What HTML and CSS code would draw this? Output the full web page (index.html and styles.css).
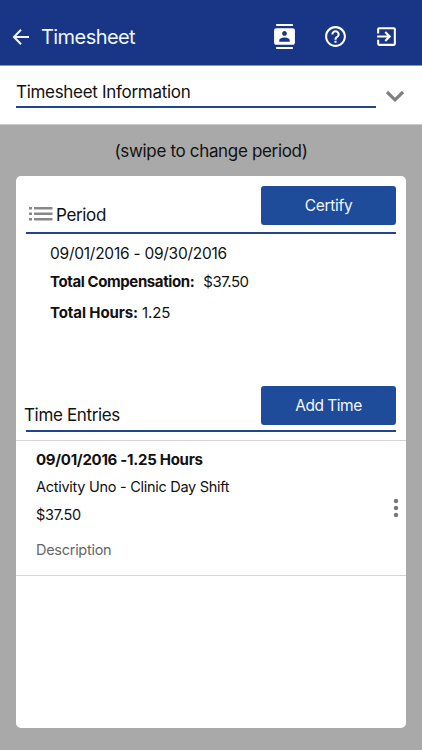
FILE: index.html
```html
<!DOCTYPE html>
<html lang="en">
<head>
<meta charset="utf-8">
<title>Timesheet</title>
<link rel="stylesheet" href="styles.css">
</head>
<body>
<header class="topbar">
  <svg class="back" viewBox="0 0 18 16"><path d="M9 .8 2 8l7 7.2M2 8h15" fill="none" stroke="currentColor" stroke-width="2"/></svg>
  <h1 class="title">Timesheet</h1>
  <svg class="action" viewBox="0 0 24 24"><path d="M20 0H4v2h16V0zM4 24h16v-2H4v2zM20 4H4c-1.100 0-2 .9-2 2v12c0 1.100.9 2 2 2h16c1.100 0 2-.9 2-2V6c0-1.100-.9-2-2-2zm-8 2.750c1.240 0 2.250 1.010 2.250 2.250s-1.010 2.250-2.250 2.250S9.750 10.240 9.750 9 10.760 6.750 12 6.750zM17 17H7v-1.500c0-1.670 3.330-2.500 5-2.500s5 .83 5 2.500V17z"/></svg>
  <svg class="action" viewBox="0 0 24 24"><path d="M11 18h2v-2h-2v2zm1-16C6.480 2 2 6.480 2 12s4.480 10 10 10 10-4.480 10-10S17.520 2 12 2zm0 18c-4.410 0-8-3.590-8-8s3.590-8 8-8 8 3.590 8 8-3.590 8-8 8zm0-14c-2.210 0-4 1.790-4 4h2c0-1.100.9-2 2-2s2 .9 2 2c0 2-3 1.750-3 5h2c0-2.250 3-2.500 3-5 0-2.210-1.790-4-4-4z"/></svg>
  <svg class="action" viewBox="0 0 24 24"><path d="M10.090 15.590L11.500 17l5-5-5-5-1.410 1.410L12.670 11H3v2h9.670l-2.580 2.590zM19 3H5c-1.110 0-2 .9-2 2v4h2V5h14v14H5v-4H3v4c0 1.100.89 2 2 2h14c1.100 0 2-.9 2-2V5c0-1.100-.9-2-2-2z"/></svg>
</header>
<section class="info">
  <h2 class="info-title">Timesheet Information</h2>
  <svg class="chevron" viewBox="0 0 20 12"><path d="M2 2l8 7.800L18 2" fill="none" stroke="#808080" stroke-width="3.200"/></svg>
</section>
<main class="content">
  <p class="hint">(swipe to change period)</p>
  <article class="card">
    <div class="section-head">
      <svg class="list-icon" viewBox="0 0 24 14"><path d="M0 0h3v2.500H0zM5 0h18.500v2.500H5zM0 5.500h3V8H0zM5 5.500h18.500V8H5zM0 11h3v2.500H0zM5 11h18.500v2.500H5z" fill="#888"/></svg>
      <h3 class="section-title">Period</h3>
      <button class="button">Certify</button>
    </div>
    <div class="summary">
      <p class="dates">09/01/2016 - 09/30/2016</p>
      <p class="compensation"><b>Total Compensation:</b><span class="amount">$37.50</span></p>
      <p class="hours"><b>Total Hours:</b><span class="count">1.25</span></p>
    </div>
    <div class="section-head entries-head">
      <h3 class="section-title">Time Entries</h3>
      <button class="button add">Add Time</button>
    </div>
    <div class="entry">
      <div class="entry-text">
        <p class="entry-date"><b>09/01/2016 -1.25 Hours</b></p>
        <p class="activity">Activity Uno - Clinic Day Shift</p>
        <p class="pay">$37.50</p>
        <p class="description">Description</p>
      </div>
      <svg class="more" viewBox="0 0 6 20"><g fill="#777"><circle cx="3" cy="3" r="2.200"/><circle cx="3" cy="10" r="2.200"/><circle cx="3" cy="17" r="2.200"/></g></svg>
    </div>
  </article>
</main>
</body>
</html>
```
FILE: styles.css
```css
* { box-sizing: border-box; }
body {
  margin: 0;
  height: 750px;
  display: flex;
  flex-direction: column;
  overflow: hidden;
  background: #a9a9a9;
  color: #111;
  font: 15px/20px Inter, Roboto, sans-serif;
  white-space: nowrap;
}
h1, h2, h3, p { margin: 0; font-weight: 400; }
b { font-weight: 700; }
svg { display: block; flex: none; }
.topbar {
  height: 66px;
  padding: 8px 23px 0 12px;
  display: flex;
  align-items: center;
  background: #193686;
  border-bottom: 1px solid #8493c4;
  color: #f0f6ff;
}
.back { width: 18px; height: 16px; }
.title {
  flex: 1;
  margin-left: 11px;
  font-size: 20px;
  line-height: 24px;
  letter-spacing: -0.57px;
}
.action { width: 25px; height: 25px; margin-left: 26px; fill: #fff; }
.info {
  height: 59px;
  padding: 0 17px 0 16px;
  display: flex;
  background: #fff;
  border-bottom: 1px solid #ccc;
}
.info-title {
  width: 360px;
  height: 42px;
  padding-top: 15px;
  border-bottom: 2px solid #1f4590;
  font-size: 17px;
  line-height: 22px;
  letter-spacing: -0.3px;
}
.chevron { width: 20px; height: 12px; margin: 24px 0 0 9px; }
.content { flex: 1; padding: 15px 16px 22px; }
.hint {
  font-size: 17px;
  line-height: 22px;
  letter-spacing: -0.33px;
  text-align: center;
}
.card {
  height: 552px;
  margin-top: 14px;
  padding-top: 10px;
  border-radius: 5px;
  background: #fff;
}
.section-head {
  height: 48px;
  margin: 0 10px;
  display: flex;
  align-items: flex-start;
  border-bottom: 2px solid #1f4590;
}
.list-icon { width: 24px; height: 14px; margin: 21px 3px 0; }
.section-title {
  flex: 1;
  margin-top: 18px;
  font-size: 17px;
  line-height: 22px;
  letter-spacing: -0.35px;
}
.button {
  width: 135px;
  height: 39px;
  padding: 0;
  border: 0;
  border-radius: 3px;
  background: #1f4b9b;
  color: #f2f7ff;
  font: 15.5px/20px Inter, Roboto, sans-serif;
  letter-spacing: -0.3px;
}
.add { letter-spacing: -0.5px; }
.summary { height: 152px; padding: 9px 34px 0; }
.dates { font-size: 15.5px; line-height: 22px; letter-spacing: -0.25px; }
.compensation { margin-top: 7px; letter-spacing: -0.5px; }
.compensation b { letter-spacing: -0.4px; }
.amount { margin-left: 9px; }
.hours { margin-top: 11px; letter-spacing: -0.12px; }
.hours b { letter-spacing: -0.1px; }
.count { margin-left: 4px; }
.entries-head { height: 46px; }
.entries-head .section-title { margin-left: -2px; }
.entry {
  height: 136px;
  margin-top: 8px;
  padding: 9px 7px 0 20px;
  display: flex;
  justify-content: space-between;
  border: solid #d4d4d4;
  border-width: 1px 0;
}
.entry-text { font-size: 14.5px; letter-spacing: -0.28px; }
.entry-date { font-size: 15px; }
.activity { margin-top: 7px; }
.pay { margin-top: 8px; }
.description { margin-top: 15px; color: #666; }
.more { width: 6px; height: 20px; margin-top: 48px; }
```
